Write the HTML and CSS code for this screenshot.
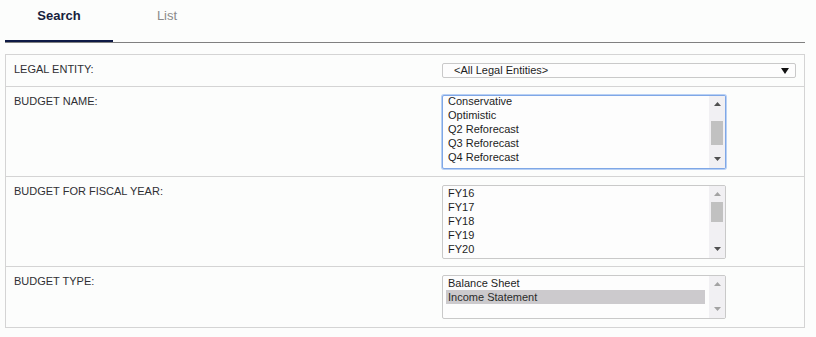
FILE: index.html
```html
<!DOCTYPE html>
<html lang="en">
<head>
<meta charset="utf-8">
<title>Budget Search</title>
<link rel="stylesheet" href="styles.css">
</head>
<body>
<div class="page">
  <nav class="tabs">
    <div class="tab active">Search</div>
    <div class="tab">List</div>
  </nav>
  <div class="panel">
    <div class="row row-entity">
      <div class="label">LEGAL ENTITY:</div>
      <div class="control">
        <div class="select">
          <span class="select-text">&lt;All Legal Entities&gt;</span>
          <svg class="select-arrow" width="8" height="6" viewBox="0 0 8 6"><polygon points="0,0 8,0 4,6" fill="#111"/></svg>
        </div>
      </div>
    </div>
    <div class="row">
      <div class="label">BUDGET NAME:</div>
      <div class="control">
        <div class="listbox tall focused">
          <div class="items scrolled">
            <div class="item">Conservative</div>
            <div class="item">Optimistic</div>
            <div class="item">Q2 Reforecast</div>
            <div class="item">Q3 Reforecast</div>
            <div class="item">Q4 Reforecast</div>
          </div>
          <div class="scrollbar">
            <div class="sb-btn"><svg width="7" height="4" viewBox="0 0 7 4"><polygon points="0,4 3.5,0 7,4" class="arrow-dark"/></svg></div>
            <div class="track"><div class="thumb thumb-name"></div></div>
            <div class="sb-btn down"><svg width="7" height="4" viewBox="0 0 7 4"><polygon points="0,0 7,0 3.5,4" class="arrow-dark"/></svg></div>
          </div>
        </div>
      </div>
    </div>
    <div class="row">
      <div class="label">BUDGET FOR FISCAL YEAR:</div>
      <div class="control">
        <div class="listbox tall">
          <div class="items">
            <div class="item">FY16</div>
            <div class="item">FY17</div>
            <div class="item">FY18</div>
            <div class="item">FY19</div>
            <div class="item">FY20</div>
          </div>
          <div class="scrollbar">
            <div class="sb-btn"><svg width="7" height="4" viewBox="0 0 7 4"><polygon points="0,4 3.5,0 7,4" class="arrow-light"/></svg></div>
            <div class="track"><div class="thumb thumb-year"></div></div>
            <div class="sb-btn down"><svg width="7" height="4" viewBox="0 0 7 4"><polygon points="0,0 7,0 3.5,4" class="arrow-dark"/></svg></div>
          </div>
        </div>
      </div>
    </div>
    <div class="row">
      <div class="label">BUDGET TYPE:</div>
      <div class="control">
        <div class="listbox short">
          <div class="items">
            <div class="item">Balance Sheet</div>
            <div class="item selected">Income Statement</div>
          </div>
          <div class="scrollbar">
            <div class="sb-btn"><svg width="7" height="4" viewBox="0 0 7 4"><polygon points="0,4 3.5,0 7,4" class="arrow-light"/></svg></div>
            <div class="track"></div>
            <div class="sb-btn down"><svg width="7" height="4" viewBox="0 0 7 4"><polygon points="0,0 7,0 3.5,4" class="arrow-light"/></svg></div>
          </div>
        </div>
      </div>
    </div>
  </div>
</div>
</body>
</html>
```

FILE: styles.css
```css
* { box-sizing: border-box; }

body {
  margin: 0;
  background: #fcfdfc;
  font-family: "Liberation Sans", Arial, sans-serif;
}

.page {
  padding: 0 11px 0 5px;
}

.tabs {
  display: flex;
  height: 43px;
  border-bottom: 1px solid #808080;
}

.tab {
  width: 108px;
  height: 42px;
  padding-top: 8px;
  text-align: center;
  font-size: 13px;
  line-height: 16px;
  color: #8a8a8a;
}

.tab.active {
  font-weight: bold;
  color: #17213d;
  box-shadow: inset 0 -2px 0 #0e1a45;
}

.panel {
  margin-top: 11px;
  border: 1px solid #d4d4d4;
}

.row {
  display: grid;
  grid-template-columns: 436px 1fr;
  border-bottom: 1px solid #d4d4d4;
}

.row:last-child {
  border-bottom: none;
}

.row:last-child .control {
  padding-bottom: 8px;
}

.label {
  padding: 7px 0 0 8px;
  font-size: 11px;
  line-height: 14px;
  color: #2f2f33;
}

.control {
  padding: 8px 0 7px 0;
}

.row-entity .control {
  padding-bottom: 8px;
}

.select {
  display: flex;
  align-items: center;
  justify-content: space-between;
  width: 354px;
  height: 15px;
  padding: 0 6px 0 11px;
  border: 1px solid #c9c9c9;
  border-radius: 2px;
  background: #fdfdfd;
  font-size: 11px;
  line-height: 13px;
  color: #1e1e1e;
}

.select-arrow {
  display: block;
}

.listbox {
  display: flex;
  width: 284px;
  border: 1px solid #c9c9c9;
  border-radius: 2px;
  background: #fdfdfd;
  overflow: hidden;
}

.listbox.tall { height: 74px; }
.listbox.short { height: 44px; }

.listbox.focused {
  border-color: #7fa7e6;
  box-shadow: 0 0 0 1px #b8d0f4;
}

.items {
  flex: 1;
  padding: 0 4px 0 3px;
  overflow: hidden;
  font-size: 11px;
  line-height: 14px;
  color: #1e1e1e;
}

.items.scrolled {
  margin-top: -2px;
}

.item {
  padding-left: 2px;
  white-space: nowrap;
}

.item.selected {
  background: #cccacd;
  color: #2a2a2a;
}

.scrollbar {
  display: flex;
  flex-direction: column;
  width: 16px;
  background: #f1f0f3;
}

.sb-btn {
  display: flex;
  align-items: center;
  justify-content: center;
  height: 16px;
  flex: none;
}

.sb-btn.down {
  align-items: flex-start;
  padding-top: 5px;
}

.sb-btn svg { display: block; }

.arrow-dark { fill: #505050; }
.arrow-light { fill: #a3a3a3; }

.track {
  flex: 1;
}

.thumb {
  margin: 0 2px;
  background: #c1c1c1;
}

.thumb-name {
  margin-top: 9px;
  height: 24px;
}

.thumb-year {
  margin-top: 0;
  height: 20px;
}
```
